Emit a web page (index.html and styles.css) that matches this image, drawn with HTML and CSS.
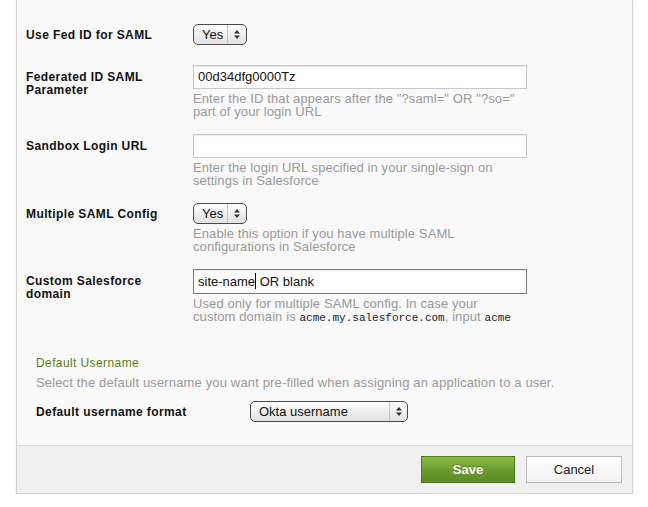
FILE: index.html
```html
<!DOCTYPE html>
<html>
<head>
<meta charset="utf-8">
<link rel="stylesheet" href="styles.css">
</head>
<body>
<div class="panel">
  <div class="form">
    <div class="row row-select">
      <div class="label">Use Fed ID for SAML</div>
      <div class="field">
        <div class="select select-short"><span class="sel-text">Yes</span><span class="sel-arrows"><svg width="6" height="9" viewBox="0 0 6 9"><path d="M3 0L6 3.5H0Z" fill="#333"/><path d="M3 9L6 5.5H0Z" fill="#333"/></svg></span></div>
      </div>
    </div>
    <div class="row">
      <div class="label label-input">Federated ID SAML<br>Parameter</div>
      <div class="field">
        <div class="input">00d34dfg0000Tz</div>
        <div class="help">Enter the ID that appears after the "?saml=" OR "?so="<br>part of your login URL</div>
      </div>
    </div>
    <div class="row">
      <div class="label label-input">Sandbox Login URL</div>
      <div class="field">
        <div class="input"></div>
        <div class="help">Enter the login URL specified in your single-sign on<br>settings in Salesforce</div>
      </div>
    </div>
    <div class="row">
      <div class="label">Multiple SAML Config</div>
      <div class="field">
        <div class="select select-short"><span class="sel-text">Yes</span><span class="sel-arrows"><svg width="6" height="9" viewBox="0 0 6 9"><path d="M3 0L6 3.5H0Z" fill="#333"/><path d="M3 9L6 5.5H0Z" fill="#333"/></svg></span></div>
        <div class="help">Enable this option if you have multiple SAML<br>configurations in Salesforce</div>
      </div>
    </div>
    <div class="row row-last">
      <div class="label label-input">Custom Salesforce<br>domain</div>
      <div class="field">
        <div class="input input-focus">site-name<span class="caret"></span> OR blank</div>
        <div class="help">Used only for multiple SAML config. In case your<br>custom domain is <code>acme.my.salesforce.com</code>, input <code>acme</code></div>
      </div>
    </div>
  </div>
  <div class="section">
    <div class="sec-title">Default Username</div>
    <div class="sec-desc">Select the default username you want pre-filled when assigning an application to a user.</div>
    <div class="sec-row">
      <div class="sec-label">Default username format</div>
      <div class="select select-wide"><span class="sel-text">Okta username</span><span class="sel-arrows"><svg width="6" height="9" viewBox="0 0 6 9"><path d="M3 0L6 3.5H0Z" fill="#333"/><path d="M3 9L6 5.5H0Z" fill="#333"/></svg></span></div>
    </div>
  </div>
  <div class="footer">
    <button class="btn btn-save">Save</button>
    <button class="btn btn-cancel">Cancel</button>
  </div>
</div>
</body>
</html>
```

FILE: styles.css
```css
html, body {
  margin: 0;
  padding: 0;
  background: #ffffff;
}

body {
  font-family: "Liberation Sans", Arial, sans-serif;
  font-size: 12px;
  color: #222;
}

.panel {
  margin-left: 16px;
  width: 615px;
  background: #f9f9f9;
  border: 1px solid #d4d4d4;
  border-top: none;
  box-shadow: 0 1px 2px rgba(0, 0, 0, 0.12);
}

.form {
  padding: 24px 0 0 9px;
}

.row {
  display: flex;
  align-items: flex-start;
  margin-bottom: 16px;
}

.row-select {
  margin-bottom: 20px;
}

.row-last {
  margin-bottom: 0;
}

.label {
  width: 167px;
  flex: none;
  font-weight: bold;
  font-size: 12px;
  line-height: 13px;
  letter-spacing: 0.4px;
  color: #111;
  padding-top: 5px;
}

.label.label-input {
  padding-top: 6px;
}

.field {
  width: 334px;
}

.input {
  box-sizing: border-box;
  height: 24px;
  width: 334px;
  background: #fff;
  border: 1px solid #c8c8c8;
  box-shadow: inset 0 1px 1px rgba(0, 0, 0, 0.08);
  font-size: 13px;
  line-height: 22px;
  padding-left: 4px;
  color: #111;
}

.input-focus {
  height: 25px;
  border-color: #7a7a7a;
  line-height: 23px;
}

.caret {
  display: inline-block;
  width: 1px;
  height: 16px;
  background: #000;
  vertical-align: -3px;
}

.help {
  margin-top: 3px;
  color: #9a9a9a;
  font-size: 13px;
  line-height: 13px;
  letter-spacing: 0.1px;
  white-space: nowrap;
}

code {
  font-family: "Liberation Mono", monospace;
  font-size: 11px;
  letter-spacing: 0;
  color: #222;
}

.select {
  box-sizing: border-box;
  display: flex;
  height: 21px;
  border: 1px solid #4a4a4a;
  border-radius: 5px;
  background: linear-gradient(#ffffff, #ececec 60%, #e2e2e2);
  box-shadow: inset 0 1px 0 #fff;
  font-size: 13px;
  color: #111;
}

.select-short {
  width: 54px;
}

.select-wide {
  width: 158px;
}

.sel-text {
  flex: 1;
  line-height: 19px;
  padding-left: 8px;
}

.sel-arrows {
  width: 18px;
  flex: none;
  border-left: 1px solid #c4c4c4;
  display: flex;
  align-items: center;
  justify-content: center;
}

.select-wide .sel-arrows {
  width: 17px;
}

.section {
  padding: 31px 0 0 19px;
}

.sec-title {
  color: #5c7f16;
  font-size: 12px;
  line-height: 14px;
  letter-spacing: 0.4px;
}

.sec-desc {
  margin-top: 6px;
  color: #9a9a9a;
  font-size: 13px;
  line-height: 14px;
  letter-spacing: 0.15px;
  white-space: nowrap;
}

.sec-row {
  display: flex;
  align-items: center;
  margin-top: 11px;
  padding-bottom: 23px;
}

.sec-label {
  width: 214px;
  flex: none;
  font-weight: bold;
  letter-spacing: 0.4px;
  color: #111;
}

.footer {
  display: flex;
  justify-content: flex-end;
  gap: 11px;
  height: 48px;
  box-sizing: border-box;
  padding: 10px 10px 0 0;
  background: #f0f0f0;
  border-top: 1px solid #d8d8d8;
}

.btn {
  box-sizing: border-box;
  height: 27px;
  font-family: "Liberation Sans", Arial, sans-serif;
  font-size: 13px;
  padding: 0;
  margin: 0;
  cursor: pointer;
}

.btn-save {
  width: 94px;
  color: #fff;
  font-weight: bold;
  background: linear-gradient(#8abb45, #6a9a2c 55%, #5c8d22);
  border: 1px solid #4d7a1c;
  text-shadow: 0 -1px 0 rgba(0, 0, 0, 0.25);
}

.btn-cancel {
  width: 96px;
  color: #222;
  background: linear-gradient(#ffffff, #f0f0f0);
  border: 1px solid #bdbdbd;
}
```
